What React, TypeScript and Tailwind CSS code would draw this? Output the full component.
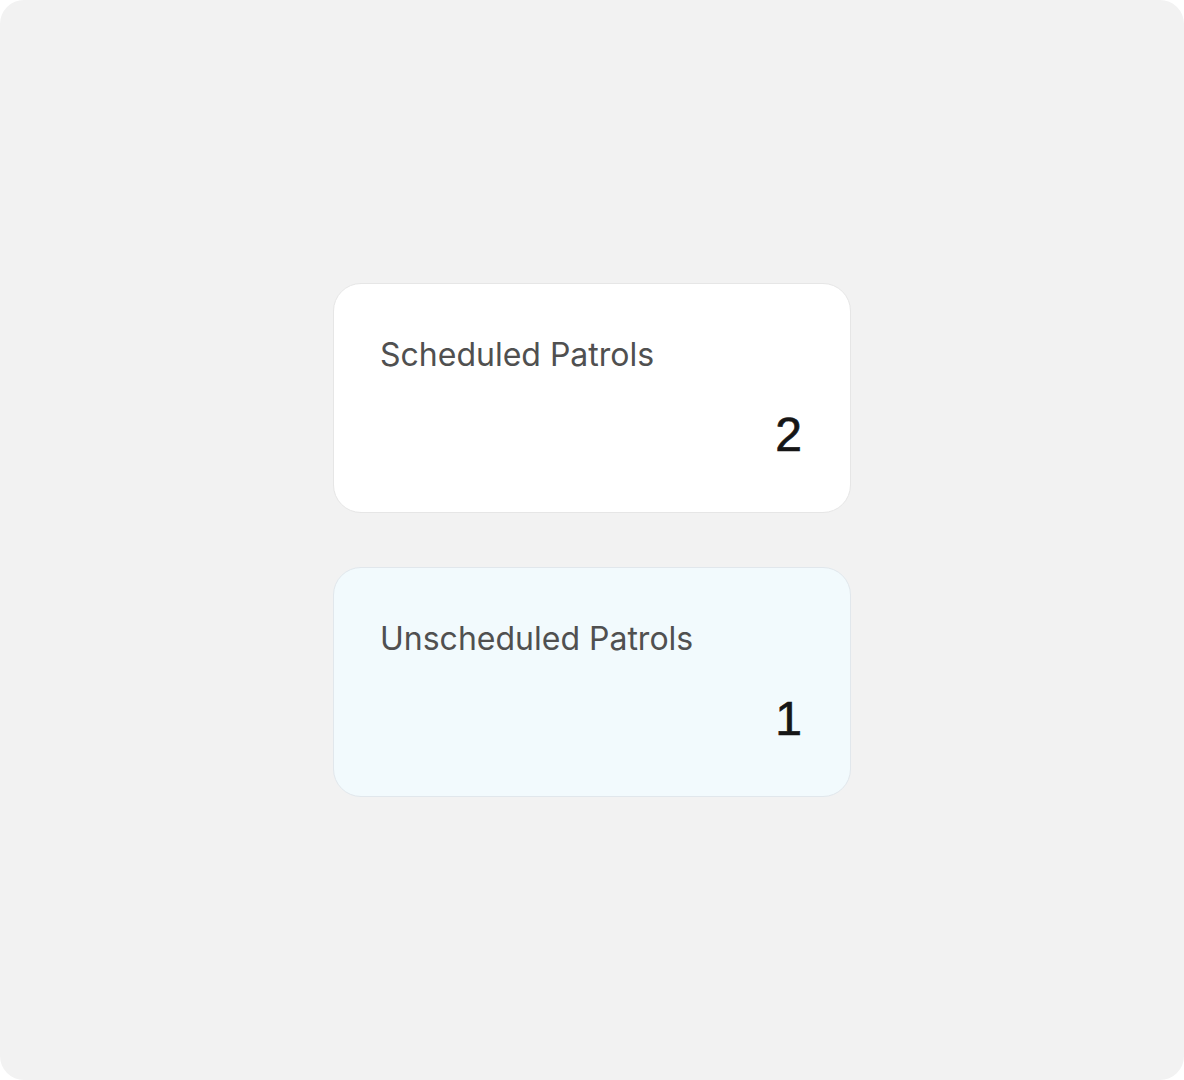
/**
 * Patrol summary cards
 */

const cards = [
  { label: 'Scheduled Patrols', count: 2, tone: 'bg-white border-[#e6e6e6]' },
  { label: 'Unscheduled Patrols', count: 1, tone: 'bg-[#f2fafd] border-[#e1e7ec]' },
];

function StatCard({ label, count, tone }: { label: string; count: number; tone: string }) {
  return (
    <div className={`w-[518px] h-[230px] rounded-[28px] border flex flex-col pl-[46px] pr-12 pt-[51px] pb-[53px] ${tone}`}>
      <p className="text-[32px] leading-10 text-[#505050] font-['Inter',sans-serif]">{label}</p>
      <p className="mt-auto text-right text-5xl leading-none text-[#161616] [-webkit-text-stroke:0.7px_#161616] font-['Liberation_Sans',Arial,sans-serif]">
        {count}
      </p>
    </div>
  );
}

export default function App() {
  return (
    <div className="w-[1184px] h-[1080px] bg-white">
      <div className="h-full rounded-3xl bg-[#f2f2f2] flex flex-col items-center justify-center gap-[54px]">
        {cards.map((c) => (
          <StatCard key={c.label} {...c} />
        ))}
      </div>
    </div>
  );
}
